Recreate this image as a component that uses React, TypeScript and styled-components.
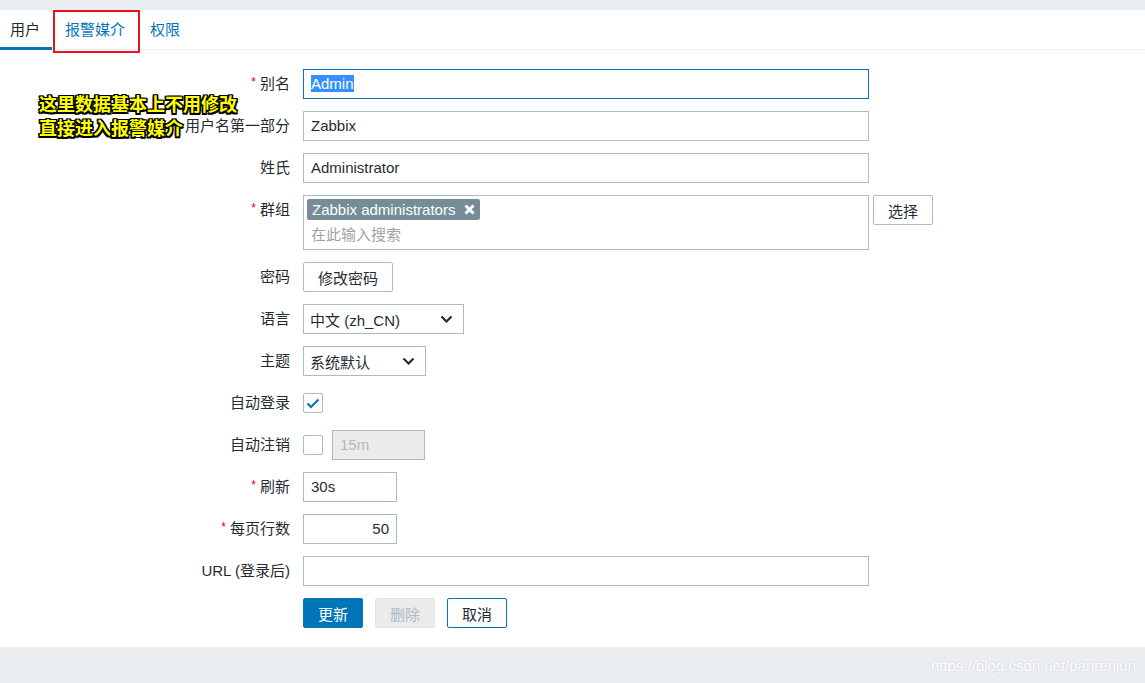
import styled, { createGlobalStyle } from 'styled-components';

const GlobalStyle = createGlobalStyle`
  html, body {
    margin: 0;
    padding: 0;
    background: #ebeef0;
    font-family: "Liberation Sans", "Noto Sans CJK SC", sans-serif;
    font-size: 15px;
    color: #1f2c33;
  }
  * { box-sizing: border-box; }
`;

const Page = styled.div`
  display: flex;
  flex-direction: column;
  height: 683px;
  padding-top: 10px;
  position: relative;
`;

const Panel = styled.div`
  background: #fff;
  height: 637px;
  position: relative;
`;

const TabBar = styled.ul`
  display: flex;
  margin: 0;
  padding: 0;
  list-style: none;
  height: 40px;
  border-bottom: 1px solid #ebeef0;
`;

const Tab = styled.li<{ $active?: boolean }>`
  position: relative;
  padding: 0 10px;
  margin-right: ${(p) => (p.$active ? '3px' : '5px')};
  line-height: 39px;
  color: ${(p) => (p.$active ? '#1f2c33' : '#0275b8')};
  border-bottom: 3px solid ${(p) => (p.$active ? '#0275b8' : 'transparent')};
  height: 40px;
  width: ${(p) => (p.$active ? '52px' : 'auto')};
`;

const RedMark = styled.span`
  position: absolute;
  left: -2px;
  right: -5px;
  top: 0;
  bottom: -6px;
  border: 2px solid #e8141d;
`;

const Form = styled.div`
  display: grid;
  grid-template-columns: 290px 1fr;
  column-gap: 13px;
  row-gap: 12px;
  padding-top: 19px;
  align-items: start;
`;

const Label = styled.div`
  height: 30px;
  line-height: 29px;
  text-align: right;
  white-space: nowrap;
`;

const Star = styled.span`
  color: #dc0000;
  font-size: 12px;
  position: relative;
  top: -3px;
  margin-right: 4px;
`;

const Field = styled.div<{ $top?: boolean }>`
  display: flex;
  align-items: ${(p) => (p.$top ? 'flex-start' : 'center')};
  gap: ${(p) => (p.$top ? 4 : 9)}px;
  min-height: 30px;
`;

const TextBox = styled.div<{ $w?: number; $focus?: boolean; $right?: boolean; $disabled?: boolean }>`
  flex-shrink: 0;
  width: ${(p) => p.$w ?? 566}px;
  height: 30px;
  line-height: 28px;
  padding: 0 7px;
  border: 1px solid ${(p) => (p.$focus ? '#0275b8' : '#acbbc2')};
  background: ${(p) => (p.$disabled ? '#ebebeb' : '#fff')};
  color: ${(p) => (p.$disabled ? '#acbbc2' : '#1f2c33')};
  text-align: ${(p) => (p.$right ? 'right' : 'left')};
  white-space: nowrap;
`;

const Selected = styled.span`
  background: #3390ff;
  color: #fff;
`;

const MultiSelect = styled.div`
  flex-shrink: 0;
  width: 566px;
  height: 55px;
  border: 1px solid #acbbc2;
  padding: 3px 3px 0;
`;

const TagChip = styled.span`
  display: inline-flex;
  align-items: center;
  gap: 9px;
  height: 21px;
  padding: 0 5px;
  background: #768d99;
  color: #fff;
  border-radius: 2px;
`;

const Placeholder = styled.div`
  color: #a3a3a3;
  padding: 3px 0 0 4px;
`;

const Button = styled.button<{ $variant?: 'primary' | 'secondary' | 'disabled' | 'plain'; $w?: number }>`
  flex-shrink: 0;
  height: 30px;
  width: ${(p) => p.$w ?? 60}px;
  padding: 0;
  font: inherit;
  border-radius: 2px;
  border: 1px solid
    ${(p) =>
      p.$variant === 'primary' || p.$variant === 'secondary'
        ? '#0275b8'
        : p.$variant === 'disabled'
        ? '#dfe4e7'
        : '#acbbc2'};
  background: ${(p) =>
    p.$variant === 'primary' ? '#0275b8' : p.$variant === 'disabled' ? '#ebebeb' : '#fff'};
  color: ${(p) =>
    p.$variant === 'primary' ? '#fff' : p.$variant === 'disabled' ? '#acbbc2' : '#1f2c33'};
`;

const Select = styled.div<{ $w: number }>`
  width: ${(p) => p.$w}px;
  height: 30px;
  border: 1px solid #acbbc2;
  display: flex;
  align-items: center;
  justify-content: space-between;
  padding: 0 10px 0 6px;
`;

const Check = styled.div`
  width: 20px;
  height: 20px;
  border: 1px solid #acbbc2;
  border-radius: 2px;
  display: flex;
  align-items: center;
  justify-content: center;
`;

const Actions = styled.div`
  display: flex;
  gap: 12px;
`;

const Note = styled.div`
  position: absolute;
  left: 39px;
  top: 83px;
  font-size: 18px;
  font-weight: bold;
  line-height: 24px;
  color: #ffff00;
  text-shadow: -1.5px -1.5px 0 #000, 1.5px -1.5px 0 #000, -1.5px 1.5px 0 #000, 1.5px 1.5px 0 #000,
    0 1.5px 0 #000, 0 -1.5px 0 #000, 1.5px 0 0 #000, -1.5px 0 0 #000;
`;

const Footer = styled.div`
  flex: 1;
  display: flex;
  align-items: center;
  justify-content: flex-end;
  padding-right: 9px;
`;

const Watermark = styled.span`
  color: #fff;
  font-size: 15px;
  text-shadow: 0 0 2px #c8cdd0;
`;

const Chevron = () => (
  <svg width="13" height="9" viewBox="0 0 13 9">
    <polyline points="1.5,1.5 6.5,6.5 11.5,1.5" fill="none" stroke="#1f2c33" strokeWidth="2.2" />
  </svg>
);

const App = () => (
  <>
    <GlobalStyle />
    <Page>
      <Panel>
        <TabBar>
          <Tab $active>用户</Tab>
          <Tab>
            报警媒介
            <RedMark />
          </Tab>
          <Tab>权限</Tab>
        </TabBar>

        <Note>
          这里数据基本上不用修改
          <br />
          直接进入报警媒介
        </Note>

        <Form>
          <Label>
            <Star>*</Star>别名
          </Label>
          <Field>
            <TextBox $focus>
              <Selected>Admin</Selected>
            </TextBox>
          </Field>

          <Label>用户名第一部分</Label>
          <Field>
            <TextBox>Zabbix</TextBox>
          </Field>

          <Label>姓氏</Label>
          <Field>
            <TextBox>Administrator</TextBox>
          </Field>

          <Label>
            <Star>*</Star>群组
          </Label>
          <Field $top>
            <MultiSelect>
              <TagChip>
                Zabbix administrators
                <svg width="11" height="11" viewBox="0 0 11 11">
                  <path d="M1.5 1.5 L9.5 9.5 M9.5 1.5 L1.5 9.5" stroke="#fff" strokeWidth="3" />
                </svg>
              </TagChip>
              <Placeholder>在此输入搜索</Placeholder>
            </MultiSelect>
            <Button $variant="plain">选择</Button>
          </Field>

          <Label>密码</Label>
          <Field>
            <Button $variant="plain" $w={90}>
              修改密码
            </Button>
          </Field>

          <Label>语言</Label>
          <Field>
            <Select $w={161}>
              <span>中文 (zh_CN)</span>
              <Chevron />
            </Select>
          </Field>

          <Label>主题</Label>
          <Field>
            <Select $w={123}>
              <span>系统默认</span>
              <Chevron />
            </Select>
          </Field>

          <Label>自动登录</Label>
          <Field>
            <Check>
              <svg width="14" height="11" viewBox="0 0 14 11">
                <polyline points="1.5,5.5 5,9 12.5,1.5" fill="none" stroke="#0275b8" strokeWidth="2.2" />
              </svg>
            </Check>
          </Field>

          <Label>自动注销</Label>
          <Field>
            <Check />
            <TextBox $w={93} $disabled>
              15m
            </TextBox>
          </Field>

          <Label>
            <Star>*</Star>刷新
          </Label>
          <Field>
            <TextBox $w={94}>30s</TextBox>
          </Field>

          <Label>
            <Star>*</Star>每页行数
          </Label>
          <Field>
            <TextBox $w={94} $right>
              50
            </TextBox>
          </Field>

          <Label>URL (登录后)</Label>
          <Field>
            <TextBox />
          </Field>

          <div />
          <Actions>
            <Button $variant="primary">更新</Button>
            <Button $variant="disabled">删除</Button>
            <Button $variant="secondary">取消</Button>
          </Actions>
        </Form>
      </Panel>
      <Footer>
        <Watermark>https://blog.csdn.net/panrenjun</Watermark>
      </Footer>
    </Page>
  </>
);

export default App;
